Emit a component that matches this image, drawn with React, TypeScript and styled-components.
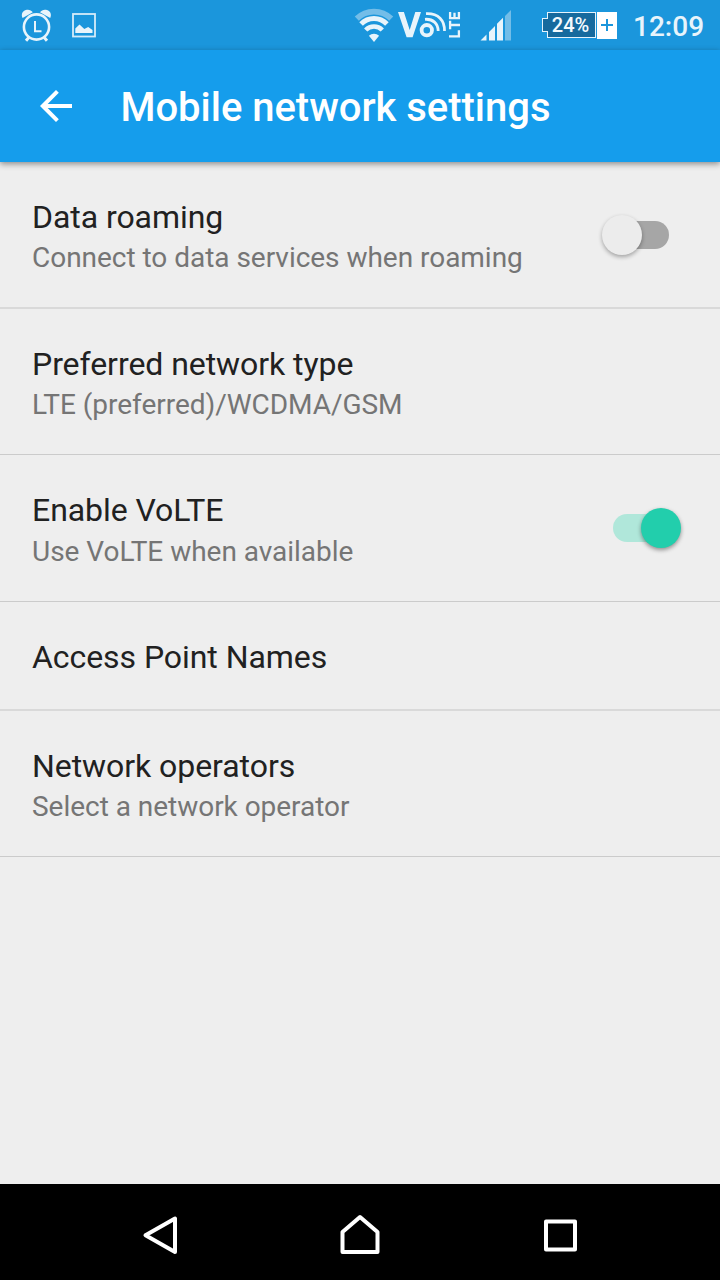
import React from "react";
import styled, { createGlobalStyle } from "styled-components";

const GlobalStyle = createGlobalStyle`
  body { margin: 0; background: #eeeeee; }
  * { box-sizing: border-box; }
`;

const Screen = styled.div`
  width: 720px;
  height: 1280px;
  display: flex;
  flex-direction: column;
  background: #eeeeee;
  font-family: Roboto, "Noto Sans", sans-serif;
  overflow: hidden;
`;

const StatusBar = styled.div`
  height: 50px;
  flex: none;
  display: flex;
  align-items: center;
  justify-content: space-between;
  padding: 0 16px 0 20px;
  background: #1b96dc;
`;

const StatusGroup = styled.div`
  display: flex;
  align-items: center;
  height: 50px;
`;

const StatusIcon = styled.svg<{ $gap?: number }>`
  display: block;
  flex: none;
  margin-right: ${(p) => p.$gap ?? 0}px;
`;

const Battery = styled.div`
  display: flex;
  align-items: center;
  height: 27px;
  margin-right: 16px;
`;

const BatteryTip = styled.div`
  width: 6px;
  height: 14px;
  margin-right: -1px;
  border: 1.5px solid #e6f3fc;
  border-right: 0;
  background: #166a9e;
  z-index: 1;
`;

const BatteryLevel = styled.div`
  width: 49px;
  height: 26px;
  padding-right: 2px;
  border: 1px solid #e6f3fc;
  background: #166a9e;
  color: #f4fafe;
  font-size: 20px;
  font-weight: 500;
  line-height: 25px;
  text-align: center;
`;

const Charging = styled.div`
  width: 20px;
  height: 27px;
  margin-left: 1px;
  background: #ffffff;
  display: flex;
  align-items: center;
  justify-content: center;
`;

const Clock = styled.span`
  width: 71px;
  color: #e8f4fb;
  font-size: 28px;
  font-weight: 500;
  line-height: 34px;
  margin-top: 3px;
  text-align: right;
  white-space: nowrap;
`;

const AppBar = styled.header`
  height: 112px;
  flex: none;
  display: flex;
  align-items: center;
  padding-left: 40px;
  background: #159dec;
  box-shadow: 0 2px 6px rgba(0, 0, 0, 0.42);
  z-index: 1;
`;

const Heading = styled.h1`
  margin: 4px 0 0 48.5px;
  color: #ffffff;
  font-size: 40px;
  font-weight: 500;
  line-height: 48px;
  letter-spacing: -0.03px;
`;

const List = styled.main`
  flex: 1;
`;

const Row = styled.section<{ $height: number; $soft?: boolean }>`
  height: ${(p) => p.$height}px;
  display: flex;
  justify-content: space-between;
  padding: 35px 32px 0;
  border-bottom: ${(p) => (p.$soft ? "2px solid #d9d9d9" : "1px solid #cbcbcb")};
`;

const Label = styled.div`
  color: #212121;
  font-size: 32px;
  line-height: 40px;
  letter-spacing: -0.06px;
`;

const Summary = styled.div<{ $tight?: boolean }>`
  margin-top: ${(p) => (p.$tight ? 3 : 4)}px;
  color: #757575;
  font-size: 28px;
  line-height: 36px;
  letter-spacing: -0.03px;
`;

const Track = styled.div<{ $on?: boolean }>`
  width: 56px;
  height: 28px;
  margin: 24px 19px 0 0;
  border-radius: 14px;
  display: flex;
  align-items: center;
  justify-content: ${(p) => (p.$on ? "flex-end" : "flex-start")};
  background: ${(p) => (p.$on ? "#b0e7da" : "#a6a6a6")};
`;

const Thumb = styled.div<{ $on?: boolean }>`
  width: 40px;
  height: 40px;
  flex: none;
  margin: 0 ${(p) => (p.$on ? -12 : 0)}px 0 ${(p) => (p.$on ? 0 : -11.5)}px;
  border-radius: 50%;
  background: ${(p) => (p.$on ? "#22ceac" : "#ececec")};
  box-shadow: 0 2px 4px ${(p) => (p.$on ? "rgba(0, 0, 0, 0.4)" : "rgba(0, 0, 0, 0.32)")};
`;

const NavBar = styled.nav`
  height: 96px;
  flex: none;
  display: flex;
  align-items: center;
  justify-content: space-between;
  padding: 6px 136px 0;
  background: #000000;
`;

const Switch = ({ on }: { on?: boolean }) => (
  <Track $on={on}>
    <Thumb $on={on} />
  </Track>
);

const AlarmIcon = () => (
  <StatusIcon $gap={19} width="32" height="36" viewBox="20 7 32 36" fill="none" stroke="#e8f4fb">
    <circle cx="36.5" cy="27" r="12.6" strokeWidth="2.6" />
    <path d="M35 21V31.2H41.5" strokeWidth="2" />
    <path d="M28.8 37.5L26 40.8M44.2 37.5L47 40.8" strokeWidth="3" />
    <path d="M22.6 18C20.8 14.5 22.4 11 25.8 10C28.6 9.2 31.2 10 32.8 12.2ZM50.2 18C52 14.5 50.4 11 47 10C44.2 9.2 41.6 10 40 12.2Z" fill="#e8f4fb" stroke="none" />
  </StatusIcon>
);

const ImageIcon = () => (
  <StatusIcon width="26" height="26" viewBox="71 12 26 26">
    <rect x="73" y="14" width="22" height="22.5" fill="none" stroke="#d5ebf9" strokeWidth="1.8" />
    <path d="M75.3 33V28.5L79.5 24.5L84.3 29L88.2 27L92.5 30V33Z" fill="#e8f4fb" />
  </StatusIcon>
);

const WifiIcon = () => (
  <StatusIcon $gap={4} width="40" height="34" viewBox="354 8 40 34" fill="none" stroke="#e8f4fb">
    <path d="M356.8 18.6A24.5 24.5 0 0 1 391.2 18.6" strokeWidth="5.8" stroke="#73bde8" />
    <path d="M361.1 24A18 18 0 0 1 386.9 24" strokeWidth="5" />
    <path d="M365.7 30A11.7 11.7 0 0 1 382.3 30" strokeWidth="4.6" />
    <path d="M374 42L368.9 35.8A7.6 7.6 0 0 1 379.1 35.8Z" fill="#e8f4fb" stroke="none" />
  </StatusIcon>
);

const VolteIcon = () => (
  <StatusIcon $gap={18} width="64" height="32" viewBox="398 9 64 32" fill="none" stroke="#e8f4fb">
    <path d="M398 12H403.9L409.7 30L415.3 12H421L412.6 37.2H406.6Z" fill="#e8f4fb" stroke="none" />
    <circle cx="426.8" cy="30.2" r="5.2" strokeWidth="3.8" />
    <path d="M425 19.3C433 18.7 438 23.5 438.2 31" strokeWidth="2.8" />
    <path d="M426 13.6C438.5 13 444.8 20.5 444.5 31" strokeWidth="2.8" />
    <path d="M449 36.3H460M458.9 37.5V30.2M449 25H460M450.1 29.3V20.7M449 18.1H460M450.1 19V12M454.5 18V12.8M458.9 19V12" strokeWidth="2.3" />
  </StatusIcon>
);

const SignalIcon = () => (
  <StatusIcon $gap={31} width="31" height="32" viewBox="480 9.5 31 32" fill="#e8f4fb">
    <path d="M480.5 41L486.5 35V41ZM489 32.4L495 26.4V41H489ZM497 24.2L503 18.3V41H497Z" />
    <path d="M505 16.5L511 10.6V41H505Z" fill="#73bde8" />
  </StatusIcon>
);

export default function App() {
  return (
    <>
      <GlobalStyle />
      <Screen>
        <StatusBar>
          <StatusGroup>
            <AlarmIcon />
            <ImageIcon />
          </StatusGroup>
          <StatusGroup>
            <WifiIcon />
            <VolteIcon />
            <SignalIcon />
            <Battery>
              <BatteryTip />
              <BatteryLevel>24%</BatteryLevel>
              <Charging>
                <svg width="12" height="12" viewBox="0 0 12 12" stroke="#1b96dc" strokeWidth="2">
                  <path d="M6 0V12M0 6H12" />
                </svg>
              </Charging>
            </Battery>
            <Clock>12:09</Clock>
          </StatusGroup>
        </StatusBar>
        <AppBar>
          <svg width="32" height="32" viewBox="0 0 32 32" fill="none" stroke="#ffffff" strokeWidth="4">
            <path d="M17.4 1.4L2.8 16L17.4 30.6M3 16H32" />
          </svg>
          <Heading>Mobile network settings</Heading>
        </AppBar>
        <List>
          <Row $height={147} $soft>
            <div>
              <Label>Data roaming</Label>
              <Summary $tight>Connect to data services when roaming</Summary>
            </div>
            <Switch />
          </Row>
          <Row $height={146}>
            <div>
              <Label>Preferred network type</Label>
              <Summary $tight>LTE (preferred)/WCDMA/GSM</Summary>
            </div>
          </Row>
          <Row $height={147}>
            <div>
              <Label>Enable VoLTE</Label>
              <Summary>Use VoLTE when available</Summary>
            </div>
            <Switch on />
          </Row>
          <Row $height={109} $soft>
            <Label>Access Point Names</Label>
          </Row>
          <Row $height={146}>
            <div>
              <Label>Network operators</Label>
              <Summary $tight>Select a network operator</Summary>
            </div>
          </Row>
        </List>
        <NavBar>
          <svg width="48" height="48" viewBox="136 1211 48 48" fill="none" stroke="#fff" strokeWidth="4" strokeLinejoin="round">
            <path d="M175 1218.5V1252L145.5 1235.3Z" />
          </svg>
          <svg width="48" height="48" viewBox="336 1211 48 48" fill="none" stroke="#fff" strokeWidth="4" strokeLinejoin="round">
            <path d="M342.5 1252V1232L360 1217L377.5 1232V1252Z" />
          </svg>
          <svg width="48" height="48" viewBox="536 1211 48 48" fill="none" stroke="#fff" strokeWidth="4" strokeLinejoin="round">
            <path d="M546 1221.5H575V1249.5H546Z" />
          </svg>
        </NavBar>
      </Screen>
    </>
  );
}
